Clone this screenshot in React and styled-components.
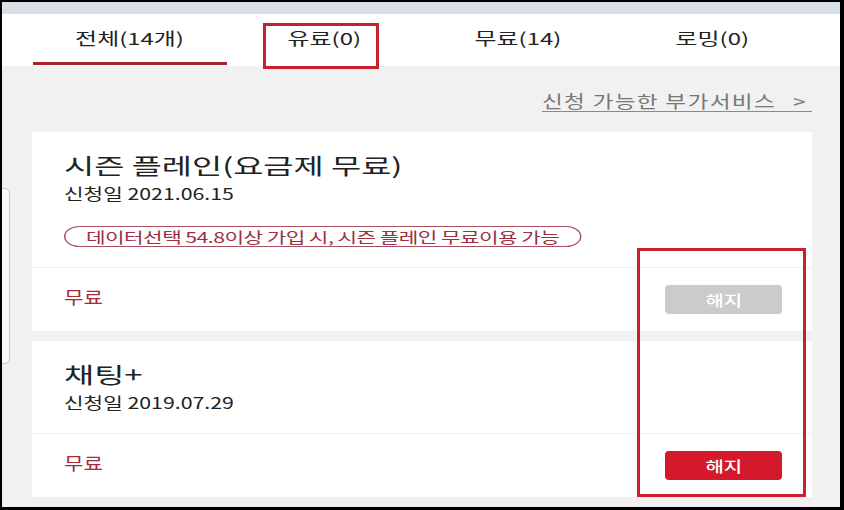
import React from 'react';
import styled, { createGlobalStyle, css } from 'styled-components';

const GlobalStyle = createGlobalStyle`
  * { box-sizing: border-box; }
  html, body { margin: 0; padding: 0; background: #000; }
  body {
    font-family: "Noto Sans CJK KR", "Noto Sans", "Liberation Sans", sans-serif;
    color: #222;
  }
`;

const stretch = css`
  display: inline-block;
  white-space: nowrap;
  transform: scaleX(${(p) => p.$sx || 1.33});
  transform-origin: ${(p) => p.$origin || 'left'} center;
`;

const tabs = [
  { label: '전체(14개)', active: true },
  { label: '유료(0)' },
  { label: '무료(14)' },
  { label: '로밍(0)' },
];

const services = [
  {
    title: '시즌 플레인(요금제 무료)',
    date: '신청일 2021.06.15',
    note: '데이터선택 54.8이상 가입 시, 시즌 플레인 무료이용 가능',
    price: '무료',
    disabled: true,
  },
  {
    title: '채팅+',
    date: '신청일 2019.07.29',
    price: '무료',
  },
];

export default function App() {
  return (
    <>
      <GlobalStyle />
      <Frame>
        <TopStrip />
        <TabBar>
          {tabs.map((t) => (
            <Tab key={t.label} $active={t.active}>
              <TabLabel $origin="center" $sx={1.45}>{t.label}</TabLabel>
            </Tab>
          ))}
        </TabBar>
        <Content>
          <LinkRow>
            <MoreLink $origin="right">
              신청 가능한 부가서비스 <Chevron>&gt;</Chevron>
            </MoreLink>
          </LinkRow>
          <CardList>
            {services.map((s) => (
              <Card key={s.title}>
                <CardBody>
                  <Title $sx={1.49}>{s.title}</Title>
                  <DateLine>{s.date}</DateLine>
                  {s.note && <Note $sx={1.47}>{s.note}</Note>}
                </CardBody>
                <CardFooter>
                  <Price $sx={1.25}>{s.price}</Price>
                  <CancelButton $disabled={s.disabled}>
                    <ButtonLabel $origin="center">해지</ButtonLabel>
                  </CancelButton>
                </CardFooter>
              </Card>
            ))}
          </CardList>
        </Content>
        <SideEdge />
        <Highlight style={{ left: 261, top: 21, width: 116, height: 46 }} />
        <Highlight style={{ left: 635, top: 246, width: 169, height: 249 }} />
      </Frame>
    </>
  );
}

const Frame = styled.div`
  position: relative;
  width: 844px;
  height: 510px;
  border-style: solid;
  border-color: #000;
  border-width: 2px 4px 3px 2px;
  background: #f1f1f1;
  overflow: hidden;
  display: flex;
  flex-direction: column;
`;

const TopStrip = styled.div`
  height: 12px;
  background: #d9dfe6;
`;

const TabBar = styled.div`
  display: flex;
  height: 52px;
  padding-left: 31px;
  background: #fff;
`;

const Tab = styled.div`
  width: 194px;
  height: 51px;
  display: flex;
  align-items: center;
  justify-content: center;
  padding-bottom: 1px;
  font-size: 16.5px;
  color: #222;
  border-bottom: 3px solid ${(p) => (p.$active ? '#a8232f' : 'transparent')};
`;

const TabLabel = styled.span`
  ${stretch}
`;

const Content = styled.div`
  flex: 1;
  padding: 0 28px 0 30px;
`;

const LinkRow = styled.div`
  height: 66px;
  display: flex;
  justify-content: flex-end;
  align-items: flex-start;
  padding-top: 24px;
`;

const MoreLink = styled.a`
  ${stretch}
  font-size: 17px;
  line-height: 21px;
  letter-spacing: 1px;
  color: #777;
  border-bottom: 1px solid #8a8a8a;
  padding-right: 4px;
`;

const Chevron = styled.span`
  margin-left: 8px;
`;

const CardList = styled.div`
  display: flex;
  flex-direction: column;
  gap: 10px;
`;

const Card = styled.div`
  background: #fff;
`;

const CardBody = styled.div`
  padding: 20px 32px 19px;
  border-bottom: 1px solid #f0f0f0;
`;

const Title = styled.div`
  ${stretch}
  display: block;
  font-size: 22px;
  line-height: 24px;
  color: #222;
`;

const DateLine = styled.div`
  ${stretch}
  display: block;
  margin-top: 5px;
  font-size: 16px;
  line-height: 24px;
  color: #222;
`;

const Note = styled.div`
  ${stretch}
  margin-top: 21px;
  height: 21px;
  padding: 0 14px;
  border: 1px solid #a9505e;
  border-radius: 11px;
  font-size: 14.5px;
  line-height: 19px;
  color: #9c2f43;
  letter-spacing: -0.4px;
`;

const CardFooter = styled.div`
  height: 63px;
  display: flex;
  align-items: center;
  justify-content: space-between;
  padding: 0 30px 0 32px;
`;

const Price = styled.span`
  ${stretch}
  font-size: 17px;
  line-height: 24px;
  padding-bottom: 5px;
  color: #a52c3a;
`;

const CancelButton = styled.button`
  width: 117px;
  height: 29px;
  border: none;
  border-radius: 4px;
  background: ${(p) => (p.$disabled ? '#cbcbcb' : '#d3192b')};
  color: #fff;
  font-family: inherit;
  font-size: 15px;
  font-weight: 500;
  display: flex;
  align-items: center;
  justify-content: center;
  padding: 0;
`;

const ButtonLabel = styled.span`
  ${stretch}
`;

const SideEdge = styled.div`
  position: absolute;
  left: -4px;
  top: 186px;
  width: 12px;
  height: 176px;
  background: #fafafa;
  border: 1px solid #c8c8c8;
  border-radius: 5px;
`;

const Highlight = styled.div`
  position: absolute;
  border: 3px solid #c9202c;
  pointer-events: none;
`;
